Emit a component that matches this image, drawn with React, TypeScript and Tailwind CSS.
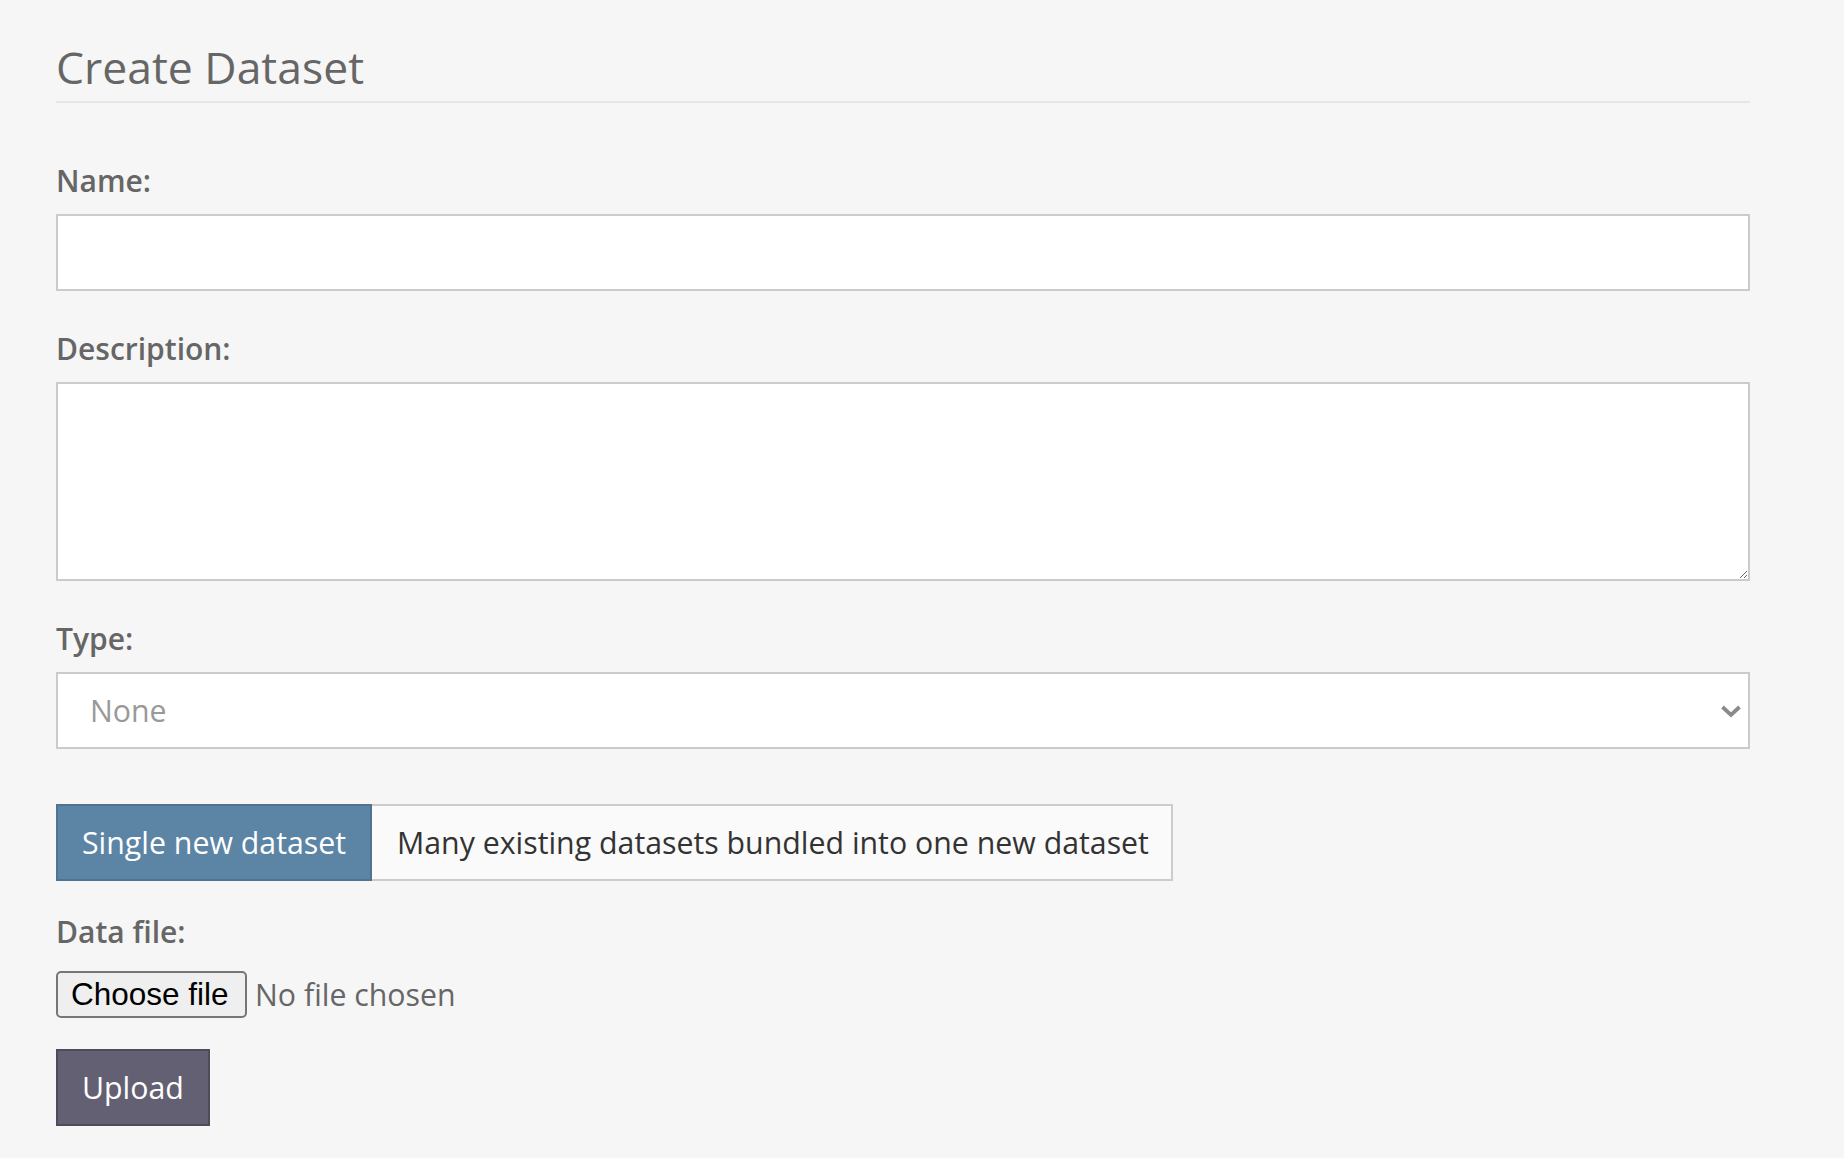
import React from "react";

export default function App() {
  const font = { fontFamily: '"Open Sans", "Noto Sans", sans-serif' };
  return (
    <div
      className="min-h-screen bg-[#f6f6f6] pl-[56px] pr-[94px] pt-[38px] pb-[30px]"
      style={font}
    >
      <h1 className="text-[44.5px] leading-[57px] font-normal text-[#666666]">
        Create Dataset
      </h1>
      <div className="mt-[6px] h-[2px] bg-[#e6e6e6]" />

      <label className="mt-[58px] block text-[30px] leading-[40px] font-semibold text-[#666666]">
        Name:
      </label>
      <input
        type="text"
        className="mt-[13px] block h-[77px] w-full border-2 border-[#cbcbcb] bg-white px-[32px] text-[30px] outline-none"
        style={font}
      />

      <label className="mt-[38px] block text-[30px] leading-[40px] font-semibold text-[#666666]">
        Description:
      </label>
      <textarea
        className="mt-[13px] block h-[199px] w-full border-2 border-[#cbcbcb] bg-white px-[32px] py-[12px] text-[30px] outline-none"
        style={font}
      />

      <label className="mt-[38px] block text-[30px] leading-[40px] font-semibold text-[#666666]">
        Type:
      </label>
      <div className="mt-[13px] flex h-[77px] w-full items-center justify-between border-2 border-[#cbcbcb] bg-white pl-[32px] pr-[6px]">
        <span className="text-[30.3px] leading-[40px] text-[#999999]">None</span>
        <svg width="22" height="14" viewBox="0 0 22 14">
          <path
            d="M2.5 3 L11 11 L19.5 3"
            fill="none"
            stroke="#8a8a8a"
            strokeWidth="3.8"
          />
        </svg>
      </div>

      <div className="mt-[55px] flex h-[77px]">
        <div className="flex w-[316px] items-center border-2 border-[#50748f] bg-[#5c84a4] pl-[24px] text-[30.3px] whitespace-nowrap text-white">
          Single new dataset
        </div>
        <div className="flex w-[801px] items-center border-2 border-l-0 border-[#cccccc] bg-[#fafafa] pl-[25px] text-[30.3px] whitespace-nowrap text-[#333333]">
          Many existing datasets bundled into one new dataset
        </div>
      </div>

      <label className="mt-[31px] block text-[30px] leading-[40px] font-semibold text-[#666666]">
        Data file:
      </label>
      <div className="mt-[19px] flex items-center">
        <button
          type="button"
          className="flex h-[47px] w-[191px] items-center rounded-[5px] border-2 border-[#767676] bg-[#efefef] pl-[13px] text-[31.5px] text-black"
          style={{ fontFamily: '"Liberation Sans", Arial, sans-serif' }}
        >
          Choose file
        </button>
        <span className="ml-[8px] text-[30.3px] text-[#666666]">No file chosen</span>
      </div>

      <button
        type="button"
        className="mt-[31px] flex h-[77px] w-[154px] items-center border-2 border-[#4e4b5d] bg-[#636074] pl-[24px] text-[30.3px] text-white"
        style={font}
      >
        Upload
      </button>
    </div>
  );
}
